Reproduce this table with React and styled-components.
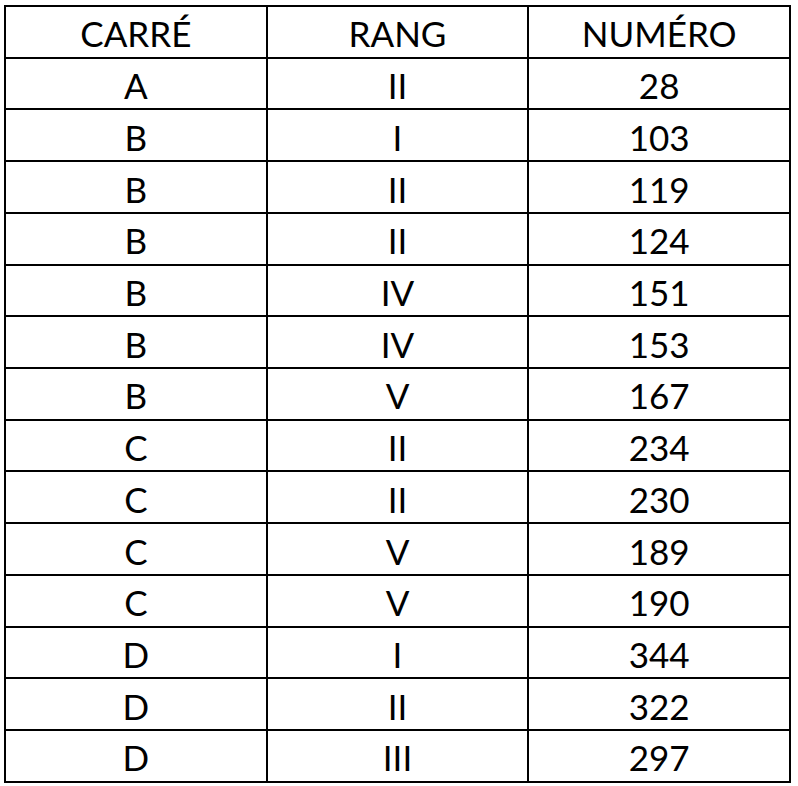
import React from "react";
import styled, { createGlobalStyle } from "styled-components";

const GlobalStyle = createGlobalStyle`
  body {
    margin: 0;
    background: #ffffff;
    font-family: Lato, "Open Sans", sans-serif;
  }
`;

const Page = styled.div`
  padding: 5px 0 0 4px;
`;

const Table = styled.table`
  width: 787px;
  border-collapse: collapse;
  table-layout: fixed;
  color: #000000;
`;

const Row = styled.tr`
  height: 51.73px;
`;

const Cell = styled.td`
  border: 2px solid #000000;
  padding: 4px 0 0 0;
  text-align: center;
  vertical-align: middle;
  font-size: 35px;
  line-height: 1;
  font-weight: 400;
`;

const rows = [
  ["A", "II", "28"],
  ["B", "I", "103"],
  ["B", "II", "119"],
  ["B", "II", "124"],
  ["B", "IV", "151"],
  ["B", "IV", "153"],
  ["B", "V", "167"],
  ["C", "II", "234"],
  ["C", "II", "230"],
  ["C", "V", "189"],
  ["C", "V", "190"],
  ["D", "I", "344"],
  ["D", "II", "322"],
  ["D", "III", "297"],
];

export default function App() {
  return (
    <Page>
      <GlobalStyle />
      <Table>
        <thead>
          <Row>
            <Cell as="th">CARRÉ</Cell>
            <Cell as="th">RANG</Cell>
            <Cell as="th">NUMÉRO</Cell>
          </Row>
        </thead>
        <tbody>
          {rows.map((row, i) => (
            <Row key={i}>
              {row.map((value, j) => (
                <Cell key={j}>{value}</Cell>
              ))}
            </Row>
          ))}
        </tbody>
      </Table>
    </Page>
  );
}
